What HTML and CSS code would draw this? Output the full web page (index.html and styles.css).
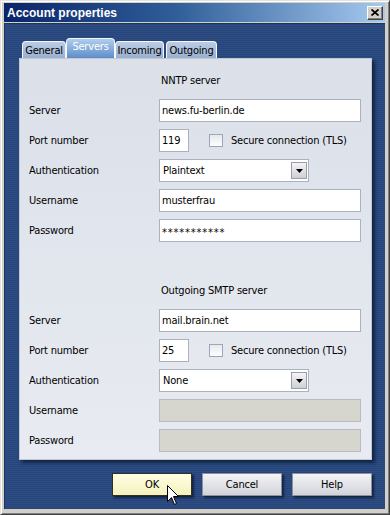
FILE: index.html
```html
<!DOCTYPE html>
<html>
<head>
<meta charset="utf-8">
<link rel="stylesheet" href="styles.css">
</head>
<body>
<div class="window">
  <div class="titlebar">
    <span class="title">Account properties</span>
    <div class="close"><svg width="8" height="7" viewBox="0 0 8 7"><path d="M0.5 0.5 L7.5 6.5 M7.5 0.5 L0.5 6.5" stroke="#000" stroke-width="1.7" fill="none"/></svg></div>
  </div>
  <div class="client">
    <div class="tabs">
      <div class="tab t-general">General</div>
      <div class="tab t-servers active">Servers</div>
      <div class="tab t-incoming">Incoming</div>
      <div class="tab t-outgoing">Outgoing</div>
    </div>
    <div class="panel">
      <div class="section">
        <div class="heading">NNTP server</div>
        <div class="form">
          <div class="lbl">Server</div>
          <div class="input">news.fu-berlin.de</div>
          <div class="lbl">Port number</div>
          <div class="portrow"><div class="input port">119</div><div class="check"></div><span class="checklbl">Secure connection (TLS)</span></div>
          <div class="lbl">Authentication</div>
          <div class="input select"><span>Plaintext</span><div class="drop"><svg width="7" height="4" viewBox="0 0 7 4"><path d="M0 0 H7 L3.5 4 Z" fill="#000"/></svg></div></div>
          <div class="lbl">Username</div>
          <div class="input">musterfrau</div>
          <div class="lbl">Password</div>
          <div class="input pw">***********</div>
        </div>
      </div>
      <div class="section second">
        <div class="heading">Outgoing SMTP server</div>
        <div class="form">
          <div class="lbl">Server</div>
          <div class="input">mail.brain.net</div>
          <div class="lbl">Port number</div>
          <div class="portrow"><div class="input port">25</div><div class="check"></div><span class="checklbl">Secure connection (TLS)</span></div>
          <div class="lbl">Authentication</div>
          <div class="input select"><span>None</span><div class="drop"><svg width="7" height="4" viewBox="0 0 7 4"><path d="M0 0 H7 L3.5 4 Z" fill="#000"/></svg></div></div>
          <div class="lbl">Username</div>
          <div class="input disabled"></div>
          <div class="lbl">Password</div>
          <div class="input disabled"></div>
        </div>
      </div>
    </div>
    <div class="buttons">
      <div class="btn default">OK</div>
      <div class="btn">Cancel</div>
      <div class="btn">Help</div>
    </div>
  </div>
</div>
<svg class="cursor" width="13" height="21" viewBox="0 0 13 21"><path d="M0.5 0.5 L0.5 16.5 L4.5 12.5 L7.5 19.5 L9.5 18.5 L6.5 11.5 L11.5 11.5 Z" fill="#fff" stroke="#000" stroke-width="1"/></svg>
</body>
</html>
```
FILE: styles.css
```css
* { box-sizing: border-box; }
html, body { margin: 0; padding: 0; }
body {
  position: relative;
  width: 390px;
  height: 515px;
  overflow: hidden;
  font-family: "DejaVu Sans Condensed", "Liberation Sans", Arial, sans-serif;
  font-size: 11px;
  letter-spacing: -0.2px;
  color: #000;
  background: #d4d0c8;
}
.window {
  width: 390px;
  height: 515px;
  background: #d4d0c8;
  border: 1px solid;
  border-color: #e4e2dc #404040 #404040 #e4e2dc;
  box-shadow: inset 1px 1px 0 #fff, inset -1px -1px 0 #808080;
  padding: 2px 4px 5px 3px;
  display: flex;
  flex-direction: column;
}
.titlebar {
  flex: none;
  height: 19px;
  background: linear-gradient(90deg, #0a246a 0%, #2f5e98 45%, #a6caf0 100%);
  display: flex;
  align-items: center;
  justify-content: space-between;
  padding: 0 2px 0 2px;
}
.title {
  color: #fff;
  font-weight: bold;
  font-size: 12px;
  letter-spacing: 0;
  font-family: "Liberation Sans", Arial, sans-serif;
  padding-left: 1px;
}
.close {
  width: 16px;
  height: 14px;
  background: #d4d0c8;
  border: 1px solid;
  border-color: #fff #404040 #404040 #fff;
  box-shadow: inset -1px -1px 0 #808080;
  display: flex;
  align-items: center;
  justify-content: center;
  padding-bottom: 1px;
}
.client {
  flex: 1;
  margin-top: 1px;
  background: repeating-linear-gradient(180deg, #2d4d83 0px, #2d4d83 1px, #26457a 1px, #26457a 2px);
  box-shadow: inset 1px 1px 0 #1c3460;
  padding: 15px 0 0 15px;
}
.tabs {
  display: flex;
  align-items: flex-end;
  height: 20px;
  margin-left: 3px;
}
.tab {
  height: 17px;
  border: 1px solid #f4f6fa;
  border-bottom: none;
  border-radius: 4px 4px 0 0;
  background: linear-gradient(180deg, #bccde4, #98afd0);
  text-align: center;
  line-height: 17px;
  color: #000;
  white-space: nowrap;
}
.t-general { width: 44px; }
.t-servers { width: 49px; }
.t-incoming { width: 49px; }
.t-outgoing { width: 51px; margin-left: 2px; }
.tab.active {
  height: 20px;
  background: linear-gradient(180deg, #b0ceef, #5d8dc9);
  color: #fff;
  line-height: 15px;
}
.panel {
  width: 353px;
  height: 402px;
  background: linear-gradient(180deg, #dbe0e9, #e8ebf1);
  border: 1px solid #c2c8d2;
  box-shadow: 3px 3px 3px rgba(8, 18, 40, 0.65);
  padding: 14px 10px 7px 9px;
}
.heading {
  height: 16px;
  line-height: 16px;
  padding-left: 132px;
  margin-bottom: 10px;
}
.second { margin-top: 41px; }
.form {
  display: grid;
  grid-template-columns: 130px 202px;
  grid-auto-rows: 23px;
  row-gap: 7px;
}
.lbl {
  display: flex;
  align-items: center;
}
.input {
  height: 23px;
  border: 1px solid #aab2be;
  background: #fff;
  padding-left: 2px;
  display: flex;
  align-items: center;
  white-space: nowrap;
}
.pw { letter-spacing: 0.8px; padding-top: 3px; }
.portrow {
  display: flex;
  align-items: center;
}
.port { width: 30px; }
.check {
  width: 14px;
  height: 13px;
  margin-left: 20px;
  border: 1px solid #9ca6b6;
  background: linear-gradient(180deg, #e6e8ec, #ffffff);
}
.checklbl { margin-left: 8px; white-space: nowrap; }
.select {
  width: 150px;
  padding-left: 3px;
  justify-content: space-between;
}
.drop {
  width: 16px;
  height: 17px;
  margin-right: 1px;
  border: 1px solid #9a9ea8;
  background: linear-gradient(180deg, #f4f4f6, #cfd0d6);
  display: flex;
  align-items: center;
  justify-content: center;
}
.disabled {
  background: #d6d5ce;
  border-color: #b8bcc2;
}
.buttons {
  width: 353px;
  margin-top: 13px;
  display: flex;
  justify-content: flex-end;
  gap: 10px;
}
.btn {
  width: 80px;
  height: 23px;
  border: 1px solid #8e909c;
  background: linear-gradient(180deg, #f4f4f6, #d2d3da);
  box-shadow: 2px 2px 2px rgba(5, 12, 30, 0.6);
  display: flex;
  align-items: center;
  justify-content: center;
}
.btn.default {
  background: linear-gradient(180deg, #ffffe4, #f4f2bc);
  border-color: #303024;
}
.cursor {
  position: absolute;
  left: 167px;
  top: 485px;
}
```
